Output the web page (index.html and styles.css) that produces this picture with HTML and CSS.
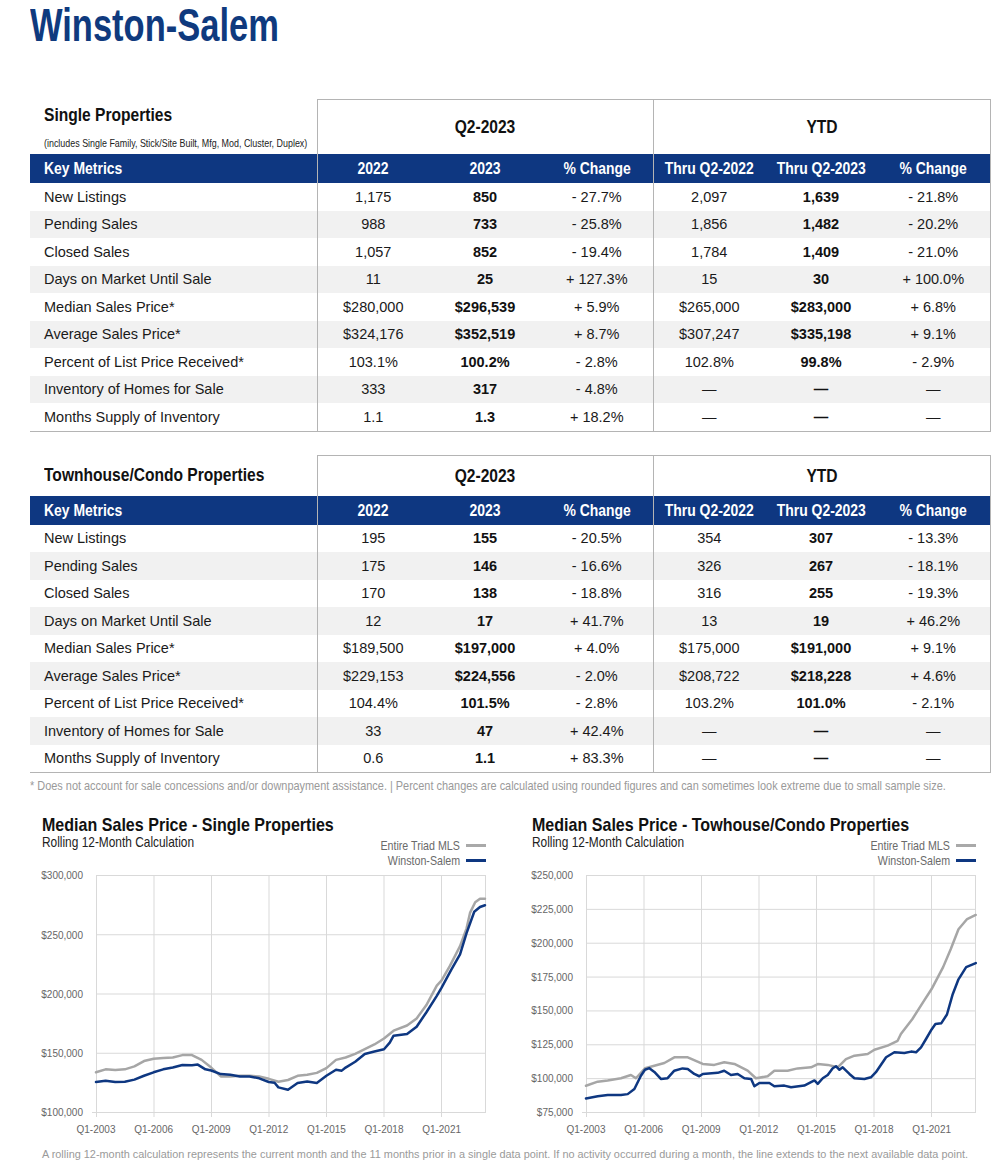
FILE: index.html
```html
<!DOCTYPE html>
<html lang="en">
<head>
<meta charset="utf-8">
<title>Winston-Salem</title>
<link rel="stylesheet" href="styles.css">
</head>
<body>
<div class="page">
  <h1 class="city"><span class="cz cz-l cz-title">Winston-Salem</span></h1>

  <table class="metrics">
    <colgroup><col class="c-label"><col class="c-num"><col class="c-num"><col class="c-num"><col class="c-num"><col class="c-num"><col class="c-last"></colgroup>
    <thead>
      <tr class="group-row tall">
        <th class="section-title"><div class="sec-name"><span class="cz cz-l">Single Properties</span></div><div class="sec-note"><span class="cz cz-l cz-note">(includes Single Family, Stick/Site Built, Mfg, Mod, Cluster, Duplex)</span></div></th>
        <th colspan="3" class="group"><span class="cz cz-c">Q2-2023</span></th>
        <th colspan="3" class="group ytd"><span class="cz cz-c">YTD</span></th>
      </tr>
      <tr class="head-row">
        <th><span class="cz cz-l">Key Metrics</span></th><th><span class="cz cz-c">2022</span></th><th><span class="cz cz-c">2023</span></th><th><span class="cz cz-c">% Change</span></th><th><span class="cz cz-c">Thru Q2-2022</span></th><th><span class="cz cz-c">Thru Q2-2023</span></th><th><span class="cz cz-c">% Change</span></th>
      </tr>
    </thead>
    <tbody>
      <tr><td>New Listings</td><td>1,175</td><td class="b">850</td><td>- 27.7%</td><td>2,097</td><td class="b">1,639</td><td>- 21.8%</td></tr>
      <tr><td>Pending Sales</td><td>988</td><td class="b">733</td><td>- 25.8%</td><td>1,856</td><td class="b">1,482</td><td>- 20.2%</td></tr>
      <tr><td>Closed Sales</td><td>1,057</td><td class="b">852</td><td>- 19.4%</td><td>1,784</td><td class="b">1,409</td><td>- 21.0%</td></tr>
      <tr><td>Days on Market Until Sale</td><td>11</td><td class="b">25</td><td>+ 127.3%</td><td>15</td><td class="b">30</td><td>+ 100.0%</td></tr>
      <tr><td>Median Sales Price*</td><td>$280,000</td><td class="b">$296,539</td><td>+ 5.9%</td><td>$265,000</td><td class="b">$283,000</td><td>+ 6.8%</td></tr>
      <tr><td>Average Sales Price*</td><td>$324,176</td><td class="b">$352,519</td><td>+ 8.7%</td><td>$307,247</td><td class="b">$335,198</td><td>+ 9.1%</td></tr>
      <tr><td>Percent of List Price Received*</td><td>103.1%</td><td class="b">100.2%</td><td>- 2.8%</td><td>102.8%</td><td class="b">99.8%</td><td>- 2.9%</td></tr>
      <tr><td>Inventory of Homes for Sale</td><td>333</td><td class="b">317</td><td>- 4.8%</td><td>—</td><td class="b">—</td><td>—</td></tr>
      <tr><td>Months Supply of Inventory</td><td>1.1</td><td class="b">1.3</td><td>+ 18.2%</td><td>—</td><td class="b">—</td><td>—</td></tr>
    </tbody>
  </table>

  <table class="metrics second">
    <colgroup><col class="c-label"><col class="c-num"><col class="c-num"><col class="c-num"><col class="c-num"><col class="c-num"><col class="c-last"></colgroup>
    <thead>
      <tr class="group-row short">
        <th class="section-title mid"><div class="sec-name"><span class="cz cz-l">Townhouse/Condo Properties</span></div></th>
        <th colspan="3" class="group"><span class="cz cz-c">Q2-2023</span></th>
        <th colspan="3" class="group ytd"><span class="cz cz-c">YTD</span></th>
      </tr>
      <tr class="head-row">
        <th><span class="cz cz-l">Key Metrics</span></th><th><span class="cz cz-c">2022</span></th><th><span class="cz cz-c">2023</span></th><th><span class="cz cz-c">% Change</span></th><th><span class="cz cz-c">Thru Q2-2022</span></th><th><span class="cz cz-c">Thru Q2-2023</span></th><th><span class="cz cz-c">% Change</span></th>
      </tr>
    </thead>
    <tbody>
      <tr><td>New Listings</td><td>195</td><td class="b">155</td><td>- 20.5%</td><td>354</td><td class="b">307</td><td>- 13.3%</td></tr>
      <tr><td>Pending Sales</td><td>175</td><td class="b">146</td><td>- 16.6%</td><td>326</td><td class="b">267</td><td>- 18.1%</td></tr>
      <tr><td>Closed Sales</td><td>170</td><td class="b">138</td><td>- 18.8%</td><td>316</td><td class="b">255</td><td>- 19.3%</td></tr>
      <tr><td>Days on Market Until Sale</td><td>12</td><td class="b">17</td><td>+ 41.7%</td><td>13</td><td class="b">19</td><td>+ 46.2%</td></tr>
      <tr><td>Median Sales Price*</td><td>$189,500</td><td class="b">$197,000</td><td>+ 4.0%</td><td>$175,000</td><td class="b">$191,000</td><td>+ 9.1%</td></tr>
      <tr><td>Average Sales Price*</td><td>$229,153</td><td class="b">$224,556</td><td>- 2.0%</td><td>$208,722</td><td class="b">$218,228</td><td>+ 4.6%</td></tr>
      <tr><td>Percent of List Price Received*</td><td>104.4%</td><td class="b">101.5%</td><td>- 2.8%</td><td>103.2%</td><td class="b">101.0%</td><td>- 2.1%</td></tr>
      <tr><td>Inventory of Homes for Sale</td><td>33</td><td class="b">47</td><td>+ 42.4%</td><td>—</td><td class="b">—</td><td>—</td></tr>
      <tr><td>Months Supply of Inventory</td><td>0.6</td><td class="b">1.1</td><td>+ 83.3%</td><td>—</td><td class="b">—</td><td>—</td></tr>
    </tbody>
  </table>

  <p class="note"><span class="cz cz-l cz-foot">* Does not account for sale concessions and/or downpayment assistance. | Percent changes are calculated using rounded figures and can sometimes look extreme due to small sample size.</span></p>

  <div class="charts">
    <div class="chart">
      <div class="chart-title"><span class="cz cz-l cz-ct">Median Sales Price - Single Properties</span></div>
      <div class="chart-sub-row">
        <div class="chart-sub"><span class="cz cz-l">Rolling 12-Month Calculation</span></div>
        <div class="legend">
          <div class="leg"><span class="cz cz-r">Entire Triad MLS</span><i class="sw sw-triad"></i></div>
          <div class="leg"><span class="cz cz-r">Winston-Salem</span><i class="sw sw-ws"></i></div>
        </div>
      </div>
      <svg class="plot" width="444" height="268" viewBox="0 0 444 268">
        <g class="grid">
          <line x1="54" y1="6.5" x2="444" y2="6.5"/>
          <line x1="54" y1="65.75" x2="444" y2="65.75"/>
          <line x1="54" y1="125" x2="444" y2="125"/>
          <line x1="54" y1="184.25" x2="444" y2="184.25"/>
          <line x1="50" y1="243.5" x2="444" y2="243.5"/>
          <line x1="54.5" y1="6" x2="54.5" y2="248"/>
          <line x1="112" y1="6" x2="112" y2="248"/>
          <line x1="169.5" y1="6" x2="169.5" y2="248"/>
          <line x1="227" y1="6" x2="227" y2="248"/>
          <line x1="284.5" y1="6" x2="284.5" y2="248"/>
          <line x1="342" y1="6" x2="342" y2="248"/>
          <line x1="399.5" y1="6" x2="399.5" y2="248"/>
          <line x1="443.5" y1="6" x2="443.5" y2="244"/>
        </g>
        <g class="ylab">
          <text x="41" y="10">$300,000</text>
          <text x="41" y="69.5">$250,000</text>
          <text x="41" y="128.5">$200,000</text>
          <text x="41" y="188">$150,000</text>
          <text x="41" y="247">$100,000</text>
        </g>
        <g class="xlab">
          <text x="54" y="264">Q1-2003</text>
          <text x="111.6" y="264">Q1-2006</text>
          <text x="169.2" y="264">Q1-2009</text>
          <text x="226.8" y="264">Q1-2012</text>
          <text x="284.4" y="264">Q1-2015</text>
          <text x="342" y="264">Q1-2018</text>
          <text x="399.6" y="264">Q1-2021</text>
        </g>
        <g transform="matrix(19.2 0 0 -1.185 54 361.5)">
          <polyline class="ln ln-triad" points="0,133.5 0.5,136 1,135.5 1.5,136 2,138.5 2.5,143 3,145 3.5,145.5 4,146 4.5,148 5,148 5.5,144 6,137.5 6.5,130 7,130 7.5,130.5 8,130.5 8.5,130 9,128 9.5,125.5 10,127 10.5,130.5 11,131.5 11.5,133 12,137 12.5,144 13,146 13.5,149 14,153 14.5,157 15,162 15.5,168.6 16.2,173 16.7,179 17.2,190 17.75,206.6 18,211 18.44,223.5 18.96,240 19.3,255 19.48,268 19.75,277 20,280 20.26,280"/>
          <polyline class="ln ln-ws" points="0,125.3 0.5,126.4 1,125.3 1.5,125.5 2,127.3 2.5,130.6 3,133.5 3.5,136 4,137.5 4.5,139.7 5,139.5 5.3,140 5.7,136 6,135 6.5,132 7,131.5 7.5,130 8,130 8.5,128.4 9,125.3 9.3,124.7 9.5,120.8 10,118.8 10.5,124.5 11,125.7 11.5,124.5 12,130.6 12.5,135.7 12.8,134.9 13,137.5 13.5,142.4 14,149 14.5,151 15,153 15.3,158.6 15.5,164.4 16.2,165.8 16.7,172 17.2,184 17.75,198 18,205 18.5,220 18.96,233 19.3,251 19.7,269 20,273 20.26,274.5"/>
        </g>
      </svg>
    </div>

    <div class="chart">
      <div class="chart-title"><span class="cz cz-l cz-ct">Median Sales Price - Towhouse/Condo Properties</span></div>
      <div class="chart-sub-row">
        <div class="chart-sub"><span class="cz cz-l">Rolling 12-Month Calculation</span></div>
        <div class="legend">
          <div class="leg"><span class="cz cz-r">Entire Triad MLS</span><i class="sw sw-triad"></i></div>
          <div class="leg"><span class="cz cz-r">Winston-Salem</span><i class="sw sw-ws"></i></div>
        </div>
      </div>
      <svg class="plot" width="444" height="268" viewBox="0 0 444 268">
        <g class="grid">
          <line x1="54" y1="6.5" x2="444" y2="6.5"/>
          <line x1="54" y1="40.36" x2="444" y2="40.36"/>
          <line x1="54" y1="74.21" x2="444" y2="74.21"/>
          <line x1="54" y1="108.07" x2="444" y2="108.07"/>
          <line x1="54" y1="141.93" x2="444" y2="141.93"/>
          <line x1="54" y1="175.79" x2="444" y2="175.79"/>
          <line x1="54" y1="209.64" x2="444" y2="209.64"/>
          <line x1="50" y1="243.5" x2="444" y2="243.5"/>
          <line x1="54.5" y1="6" x2="54.5" y2="248"/>
          <line x1="112" y1="6" x2="112" y2="248"/>
          <line x1="169.5" y1="6" x2="169.5" y2="248"/>
          <line x1="227" y1="6" x2="227" y2="248"/>
          <line x1="284.5" y1="6" x2="284.5" y2="248"/>
          <line x1="342" y1="6" x2="342" y2="248"/>
          <line x1="399.5" y1="6" x2="399.5" y2="248"/>
          <line x1="443.5" y1="6" x2="443.5" y2="244"/>
        </g>
        <g class="ylab">
          <text x="41" y="10">$250,000</text>
          <text x="41" y="43.9">$225,000</text>
          <text x="41" y="77.7">$200,000</text>
          <text x="41" y="111.6">$175,000</text>
          <text x="41" y="145.4">$150,000</text>
          <text x="41" y="179.3">$125,000</text>
          <text x="41" y="213.1">$100,000</text>
          <text x="41" y="247">$75,000</text>
        </g>
        <g class="xlab">
          <text x="54" y="264">Q1-2003</text>
          <text x="111.6" y="264">Q1-2006</text>
          <text x="169.2" y="264">Q1-2009</text>
          <text x="226.8" y="264">Q1-2012</text>
          <text x="284.4" y="264">Q1-2015</text>
          <text x="342" y="264">Q1-2018</text>
          <text x="399.6" y="264">Q1-2021</text>
        </g>
        <g transform="matrix(19.2 0 0 -1.354 54 344.55)">
          <polyline class="ln ln-triad" points="0,94.4 0.61,97.4 1.13,98.3 1.82,99.9 2.34,102.3 2.6,99.9 3.07,107.3 3.56,109.2 4.08,111.2 4.6,115.4 5.3,115.4 6.08,110.5 6.68,109.8 7.2,111.7 7.73,110.5 8.42,105.5 8.85,99.9 9.46,101.4 9.81,105.5 10.5,105.5 11.02,107.2 11.72,108 12.07,110.4 12.59,109.8 13.11,108 13.54,114.1 13.98,116.6 14.67,117.8 15.02,121 15.71,124 16.23,127.6 16.4,132.6 17,143.7 17.55,156 18,165.8 18.6,182 19,195.4 19.4,210 19.85,217.5 20.3,220.5"/>
          <polyline class="ln ln-ws" points="0,85 0.61,86.6 1.13,87.5 1.82,87.5 2.17,88.2 2.52,92 2.86,101.8 3.07,106.2 3.3,107.4 3.56,104.6 3.9,99.4 4.25,100 4.6,105.5 5.03,107.2 5.3,106.8 5.64,103.1 5.9,101.4 6.08,103.1 6.86,103.9 7.2,105.5 7.55,102.3 7.9,103.1 8.25,99.9 8.6,99.4 8.77,94 9.03,96.4 9.55,96.4 9.81,94 10.33,94.5 10.68,93.3 11.37,94.5 11.72,97 11.9,98.3 12.07,95.8 12.33,99.9 12.59,102.3 12.85,107.3 13.02,108.8 13.2,106.2 13.37,108 13.72,103.1 13.98,99.9 14.5,99.4 14.84,100.6 15.1,104.4 15.63,115.4 16.06,119.1 16.58,118.6 16.93,119.6 17.19,119.1 17.45,122.8 17.71,128.9 18,136 18.2,140 18.5,140.5 18.8,147 19.1,162 19.4,173 19.8,182 20.3,185"/>
        </g>
      </svg>
    </div>
  </div>

  <p class="foot">A rolling 12-month calculation represents the current month and the 11 months prior in a single data point. If no activity occurred during a month, the line extends to the next available data point.</p>
</div>
</body>
</html>
```

FILE: styles.css
```css
html, body {
  margin: 0;
  padding: 0;
  background: #ffffff;
  overflow-x: hidden;
}

body {
  font-family: "Liberation Sans", Arial, sans-serif;
  color: #1a1a1a;
}

.page {
  width: 960px;
  padding-left: 30px;
}

/* condensed look: horizontally squeezed text */
.cz {
  display: inline-block;
  white-space: nowrap;
  transform: scaleX(0.82);
}
.cz-l { transform-origin: left center; }
.cz-c { transform-origin: center center; }
.cz-r { transform-origin: right center; }
.cz-title { transform: scaleX(0.75); }
.cz-note { transform: scaleX(0.81); }
.cz-foot { transform: scaleX(0.84); }
.cz-ct { transform: scaleX(0.845); }

.city {
  margin: 0 0 49px;
  height: 50px;
  font-weight: bold;
  font-size: 46px;
  line-height: 50px;
  color: #0f3a7e;
  white-space: nowrap;
}

/* ---------- tables ---------- */
.metrics {
  width: 960px;
  border-collapse: collapse;
  table-layout: fixed;
}

.metrics.second {
  margin-top: 23px;
}

.c-label { width: 287px; }
.c-num { width: 112px; }
.c-last { width: 113px; }

.metrics th,
.metrics td {
  padding: 0;
}

.group-row.tall th { height: 54px; }
.group-row.short th { height: 40px; }

.section-title {
  text-align: left;
  vertical-align: top;
  padding: 0 0 0 14px !important;
  font-weight: normal;
  white-space: nowrap;
}

.section-title .sec-name {
  margin-top: 5px;
}

.section-title.mid {
  vertical-align: middle;
}

.section-title.mid .sec-name {
  margin-top: 0;
}

.sec-name {
  font-weight: bold;
  font-size: 19px;
  line-height: 20px;
  color: #111;
}

.sec-note {
  margin-top: 12px;
  font-size: 11px;
  line-height: 12px;
  color: #222;
  width: 272px;
  overflow: hidden;
}

.group {
  border-top: 1px solid #b4b4b4;
  border-left: 1px solid #b4b4b4;
  text-align: center;
  vertical-align: middle;
  font-weight: bold;
  font-size: 19px;
  color: #111;
}

.group.ytd {
  border-right: 1px solid #b4b4b4;
}

.head-row th {
  height: 29px;
  background: #0e3781;
  color: #ffffff;
  font-weight: bold;
  font-size: 17px;
  line-height: 29px;
  text-align: center;
  white-space: nowrap;
}

.head-row th:first-child {
  text-align: left;
  padding-left: 14px;
}

.metrics tbody td {
  height: 27.5px;
  font-size: 14.5px;
  text-align: center;
  vertical-align: middle;
  color: #1a1a1a;
}

.metrics tbody td:first-child {
  text-align: left;
  padding-left: 14px;
}

.metrics tbody tr:nth-child(even) td {
  background: #f1f1f1;
}

.metrics .head-row th:nth-child(2),
.metrics .head-row th:nth-child(5),
.metrics tbody td:nth-child(2),
.metrics tbody td:nth-child(5) {
  border-left: 1px solid #b4b4b4;
}

.metrics .head-row th:last-child,
.metrics tbody td:last-child {
  border-right: 1px solid #b4b4b4;
}

.metrics tbody tr:last-child td {
  border-bottom: 1px solid #b4b4b4;
}

.metrics td.b {
  font-weight: bold;
  color: #111;
}

.note {
  margin: 6px 0 0;
  width: 960px;
  overflow: hidden;
  font-size: 13px;
  line-height: 14px;
  color: #9a9a9a;
  white-space: nowrap;
}

/* ---------- charts ---------- */
.charts {
  display: flex;
  gap: 46px;
  padding-left: 12px;
  margin-top: 22px;
}

.chart {
  width: 444px;
  display: flex;
  flex-direction: column;
}

.chart-title {
  font-weight: bold;
  font-size: 19px;
  line-height: 20px;
  color: #111;
  white-space: nowrap;
  overflow: hidden;
}

.chart-sub-row {
  display: flex;
  justify-content: space-between;
  align-items: flex-start;
  margin-top: -1px;
}

.chart-sub {
  font-size: 14.5px;
  line-height: 16px;
  color: #222;
}

.legend {
  padding-top: 4px;
  display: flex;
  flex-direction: column;
  align-items: flex-end;
}

.leg {
  display: flex;
  align-items: center;
  font-size: 13px;
  line-height: 15px;
  color: #6a6a6a;
}

.sw {
  display: block;
  width: 20px;
  height: 3px;
  margin-left: 6px;
}

.sw-triad { background: #a9a9a9; }
.sw-ws { background: #0e3781; }

.plot {
  display: block;
  margin-top: 1px;
  overflow: visible;
}

.grid line {
  stroke: #d9d9d9;
  stroke-width: 1;
}

.ylab text {
  font-family: "Liberation Sans", Arial, sans-serif;
  font-size: 10px;
  fill: #666;
  text-anchor: end;
}

.xlab text {
  font-family: "Liberation Sans", Arial, sans-serif;
  font-size: 10px;
  fill: #666;
  text-anchor: middle;
}

.ln {
  fill: none;
  stroke-width: 2.5;
  stroke-linejoin: round;
  stroke-linecap: round;
  vector-effect: non-scaling-stroke;
}

.ln-triad { stroke: #a6a6a6; }
.ln-ws { stroke: #0e3781; }

.foot {
  margin: 10px 0 0 12px;
  font-size: 10.9px;
  line-height: 14px;
  color: #9a9a9a;
  white-space: nowrap;
}
```
